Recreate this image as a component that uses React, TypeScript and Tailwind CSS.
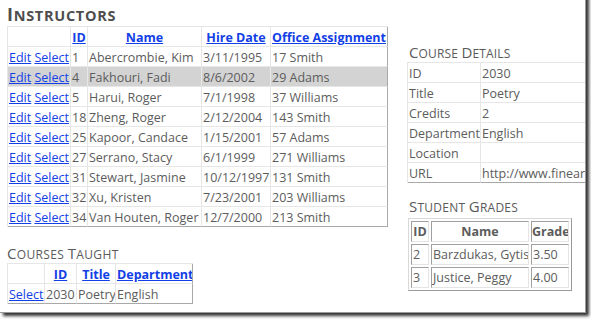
import React from "react";

const LINK = "text-[#1240e6] underline";
const FONT = { fontFamily: '"Open Sans", "Noto Sans", sans-serif' };

const instructors = [
  { id: "1", name: "Abercrombie, Kim", date: "3/11/1995", office: "17 Smith" },
  { id: "4", name: "Fakhouri, Fadi", date: "8/6/2002", office: "29 Adams", sel: true },
  { id: "5", name: "Harui, Roger", date: "7/1/1998", office: "37 Williams" },
  { id: "18", name: "Zheng, Roger", date: "2/12/2004", office: "143 Smith" },
  { id: "25", name: "Kapoor, Candace", date: "1/15/2001", office: "57 Adams" },
  { id: "27", name: "Serrano, Stacy", date: "6/1/1999", office: "271 Williams" },
  { id: "31", name: "Stewart, Jasmine", date: "10/12/1997", office: "131 Smith" },
  { id: "32", name: "Xu, Kristen", date: "7/23/2001", office: "203 Williams" },
  { id: "34", name: "Van Houten, Roger", date: "12/7/2000", office: "213 Smith" },
];

const details = [
  ["ID", "2030"],
  ["Title", "Poetry"],
  ["Credits", "2"],
  ["Department", "English"],
  ["Location", ""],
  ["URL", "http://www.fineartsschool.net/Poetry"],
];

const grades = [
  ["2", "Barzdukas, Gytis", "3.50"],
  ["3", "Justice, Peggy", "4.00"],
];

const cell =
  "h-[20px] border-r border-b border-[#e6e6e6] leading-[21px] px-[1px] whitespace-nowrap overflow-hidden";

function SmallCaps({ words, big, small }: { words: string[]; big: string; small: string }) {
  return (
    <>
      {words.map((w, i) => (
        <React.Fragment key={i}>
          {i > 0 && <span className={small}> </span>}
          <span className={big}>{w[0]}</span>
          <span className={small}>{w.slice(1).toUpperCase()}</span>
        </React.Fragment>
      ))}
    </>
  );
}

export default function App() {
  return (
    <div className="w-[591px] h-[320px] bg-white overflow-hidden text-[12.5px] text-[#5c5c5c]" style={FONT}>
      <div className="w-[586px] h-[323px] -mt-[10px] pt-[10px] bg-white border-r border-b border-[#9a9a9a] shadow-[3px_3px_3px_rgba(0,0,0,0.8)] overflow-hidden">
        <div className="flex">
          {/* left column */}
          <div className="w-[407px] shrink-0 pl-[7px]">
            <div className="h-[26px] pt-[3px] leading-[22px] font-bold text-[#4e4e4e] whitespace-nowrap tracking-[0.7px]">
              <SmallCaps words={["Instructors"]} big="text-[18px]" small="text-[14.5px]" />
            </div>
            <div className="w-[381px] border-l border-t border-[#e6e6e6]">
              <div className="grid grid-cols-[63px_17px_114px_69px_117px] font-bold text-center">
                <div className={cell}></div>
                <div className={cell}><span className={LINK}>ID</span></div>
                <div className={cell}><span className={LINK}>Name</span></div>
                <div className={cell}><span className={LINK}>Hire Date</span></div>
                <div className={`${cell} border-r-[#a8a8a8]`}><span className={LINK}>Office Assignment</span></div>
              </div>
              {instructors.map((r, i) => {
                const last = i === instructors.length - 1;
                const c = `${cell} ${last ? "border-b-[#a8a8a8]" : ""}`;
                return (
                  <div
                    key={r.id}
                    className={`grid grid-cols-[63px_17px_114px_69px_117px] ${r.sel ? "bg-[#d3d3d3]" : ""}`}
                  >
                    <div className={c}>
                      <span className={LINK}>Edit</span> <span className={LINK}>Select</span>
                    </div>
                    <div className={c}>{r.id}</div>
                    <div className={c}>{r.name}</div>
                    <div className={c}>{r.date}</div>
                    <div className={`${c} border-r-[#a8a8a8]`}>{r.office}</div>
                  </div>
                );
              })}
            </div>

            <div className="h-[36px] pt-[17px] leading-[18px] text-[#5a5a5a] whitespace-nowrap tracking-[0.35px]">
              <SmallCaps words={["Courses", "Taught"]} big="text-[15px]" small="text-[12px]" />
            </div>
            <div className="w-[186px] border-l border-t border-[#e6e6e6]">
              <div className="grid grid-cols-[37px_32px_39px_77px] font-bold text-center">
                <div className={cell}></div>
                <div className={cell}><span className={LINK}>ID</span></div>
                <div className={cell}><span className={LINK}>Title</span></div>
                <div className={`${cell} border-r-[#a8a8a8]`}><span className={LINK}>Department</span></div>
              </div>
              <div className="grid grid-cols-[37px_32px_39px_77px]">
                <div className={`${cell} border-b-[#a8a8a8]`}><span className={LINK}>Select</span></div>
                <div className={`${cell} border-b-[#a8a8a8]`}>2030</div>
                <div className={`${cell} border-b-[#a8a8a8]`}>Poetry</div>
                <div className={`${cell} border-b-[#a8a8a8] border-r-[#a8a8a8]`}>English</div>
              </div>
            </div>
          </div>

          {/* right column */}
          <div className="flex-1 min-w-0 overflow-hidden">
            <div className="h-[62px] pt-[43px] pl-[2px] leading-[18px] text-[#5a5a5a] whitespace-nowrap tracking-[0.15px]">
              <SmallCaps words={["Course", "Details"]} big="text-[15px]" small="text-[12px]" />
            </div>
            <div className="w-[300px] border-l border-t border-[#e6e6e6]">
              {details.map(([k, v], i) => {
                const last = i === details.length - 1;
                const c = `${cell} ${last ? "border-b-[#a8a8a8]" : ""}`;
                return (
                  <div key={k} className="grid grid-cols-[73px_226px]">
                    <div className={c}>{k}</div>
                    <div className={c}>{v}</div>
                  </div>
                );
              })}
            </div>

            <div className="h-[35px] pt-[14px] pl-[2px] leading-[18px] text-[#5a5a5a] whitespace-nowrap tracking-[0.25px]">
              <SmallCaps words={["Student", "Grades"]} big="text-[15px]" small="text-[12px]" />
            </div>
            <div className="ml-[1px] w-[164px] border border-[#d8d8d8] border-r-[#9a9a9a] border-b-[#9a9a9a] p-[2px]">
              <div className="grid grid-cols-[18px_98px_38px] gap-[2px]">
                {[["ID", "Name", "Grade"], ...grades].map((row, ri) =>
                  row.map((t, ci) => (
                    <div
                      key={`${ri}-${ci}`}
                      className={`h-[21px] border border-[#a0a0a0] border-r-[#e4e4e4] border-b-[#e4e4e4] leading-[20px] whitespace-nowrap overflow-hidden ${
                        ri === 0 ? "font-bold text-center" : "pl-[1px]"
                      }`}
                    >
                      {t}
                    </div>
                  ))
                )}
              </div>
            </div>
          </div>
        </div>
      </div>
    </div>
  );
}
